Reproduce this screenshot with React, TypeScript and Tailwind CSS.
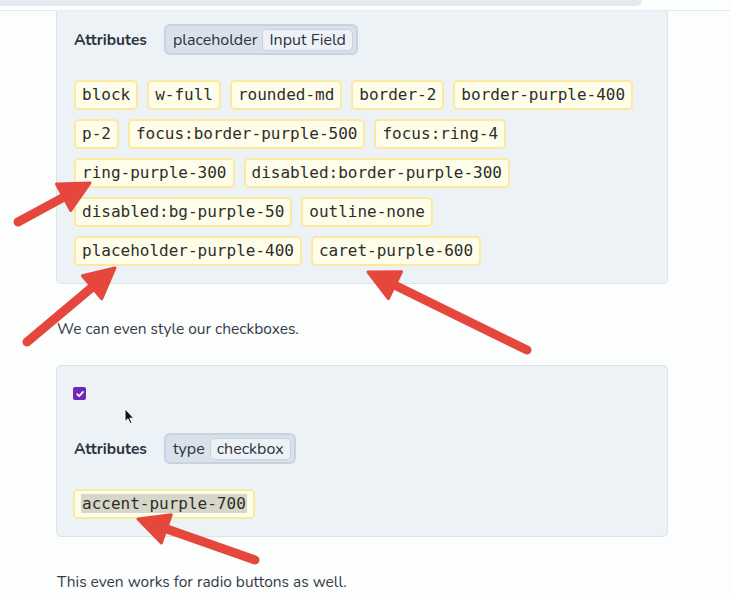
const firstTags = [
  "block",
  "w-full",
  "rounded-md",
  "border-2",
  "border-purple-400",
  "p-2",
  "focus:border-purple-500",
  "focus:ring-4",
  "ring-purple-300",
  "disabled:border-purple-300",
  "disabled:bg-purple-50",
  "outline-none",
  "placeholder-purple-400",
  "caret-purple-600",
];

// red annotation arrows: tail -> tip
const arrows = [
  { x1: 18, y1: 222, x2: 90, y2: 183 },
  { x1: 27, y1: 342, x2: 115, y2: 268 },
  { x1: 527, y1: 350, x2: 368, y2: 272 },
  { x1: 255, y1: 560, x2: 138, y2: 519 },
];

const sans = "font-['Nunito','Noto_Sans',sans-serif]";
const mono = "font-['DejaVu_Sans_Mono',monospace]";

function Tag({ label, selected }: { label: string; selected?: boolean }) {
  return (
    <span
      className={`${mono} inline-block rounded-[5px] border-2 border-[#fbe9a0] bg-[#fefde9] px-[6px] text-[16px] leading-[26px] text-[#2d2d2d]`}
    >
      {selected ? <span className="bg-[#d7d7c9] px-[1px]">{label}</span> : label}
    </span>
  );
}

function Attr({ name, value }: { name: string; value: string }) {
  return (
    <div className="flex items-center gap-[17px]">
      <span className="text-[15.5px] font-bold text-[#2b3340]">Attributes</span>
      <span className="flex h-[31px] items-center gap-[5px] rounded-[6px] border-2 border-[#c9d3df] bg-[#d9e2ec] pl-[7px] pr-[3px] text-[16px] text-[#2b3340]">
        {name}
        <span className="flex h-[22px] items-center rounded-[5px] border border-[#c9d3df] bg-[#eef2f7] px-[6px]">
          {value}
        </span>
      </span>
    </div>
  );
}

function Arrow({ x1, y1, x2, y2 }: { x1: number; y1: number; x2: number; y2: number }) {
  const dx = x2 - x1;
  const dy = y2 - y1;
  const len = Math.hypot(dx, dy);
  const ux = dx / len;
  const uy = dy / len;
  const L = 30;
  const W = 15;
  const bx = x2 - ux * L;
  const by = y2 - uy * L;
  const px = -uy;
  const py = ux;
  const head = `${x2},${y2} ${bx + px * W},${by + py * W} ${bx - px * W},${by - py * W}`;
  return (
    <g>
      <line
        x1={x1}
        y1={y1}
        x2={bx + ux * 4}
        y2={by + uy * 4}
        stroke="#e6473d"
        strokeWidth={9}
        strokeLinecap="round"
      />
      <polygon points={head} fill="#e6473d" stroke="#e6473d" strokeWidth={3} strokeLinejoin="round" />
    </g>
  );
}

export default function App() {
  return (
    <div className={`${sans} relative h-[593px] w-[731px] overflow-hidden bg-[#fcfdfd]`}>
      <div className="h-[6px] w-[642px] rounded-br-[10px] bg-[#e4e9f0]" />
      <div className="mt-[4px] h-px w-full bg-[#e6e9ed]" />

      <div className="ml-[56px] w-[612px]">
        {/* first example panel, top cut off */}
        <div className="rounded-b-[5px] border border-t-0 border-[#dbe2ea] bg-[#edf2f7] pb-[17px] pl-[17px] pr-[17px] pt-[13px]">
          <Attr name="placeholder" value="Input Field" />
          <div className="mt-[25px] flex flex-wrap gap-x-[9px] gap-y-[9px]">
            {firstTags.map((t) => (
              <Tag key={t} label={t} />
            ))}
          </div>
        </div>

        <p className="ml-px mt-[34px] text-[15.5px] leading-[22px] text-[#353c4a]">
          We can even style our checkboxes.
        </p>

        {/* checkbox example panel */}
        <div className="mt-[25px] rounded-[5px] border border-[#dbe2ea] bg-[#edf2f7] pb-[17px] pl-[16px] pr-[17px] pt-[21px]">
          <div className="flex h-[13px] w-[13px] items-center justify-center rounded-[2px] bg-[#6d28b8]">
            <svg viewBox="0 0 12 12" className="h-[10px] w-[10px]">
              <path d="M2.5 6.2 L5 8.6 L9.6 3.4" fill="none" stroke="#fff" strokeWidth={2} strokeLinecap="round" strokeLinejoin="round" />
            </svg>
          </div>
          <div className="mt-[33px] pl-px">
            <Attr name="type" value="checkbox" />
          </div>
          <div className="mt-[25px] flex">
            <Tag label="accent-purple-700" selected />
          </div>
        </div>

        <p className="ml-px mt-[34px] text-[15.5px] leading-[22px] text-[#353c4a]">
          This even works for radio buttons as well.
        </p>
      </div>

      {/* mouse cursor */}
      <svg className="absolute left-[124px] top-[408px]" width="11" height="17" viewBox="0 0 11 17">
        <path d="M1 1 L1 13.5 L4 10.8 L6.2 15.6 L8 14.8 L5.9 10.2 L9.8 10.2 Z" fill="#111" stroke="#fff" strokeWidth={1} strokeLinejoin="round" />
      </svg>

      {/* annotation arrows */}
      <svg className="pointer-events-none absolute left-0 top-0" width="731" height="593">
        {arrows.map((a, i) => (
          <Arrow key={i} {...a} />
        ))}
      </svg>
    </div>
  );
}
